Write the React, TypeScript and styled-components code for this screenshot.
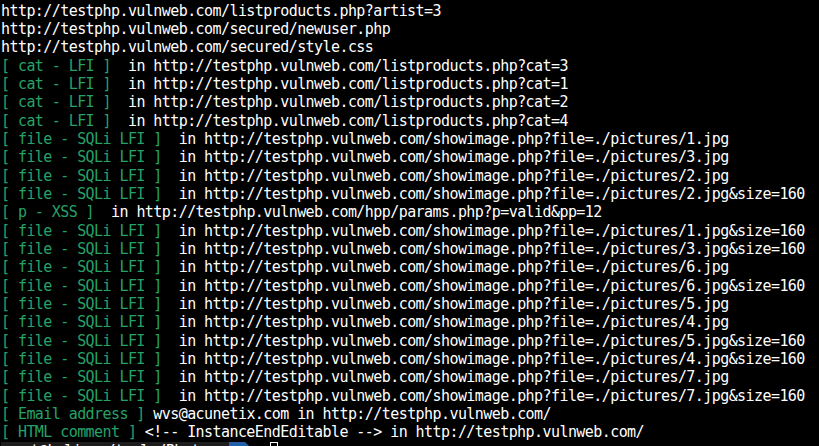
import React from "react";
import styled, { createGlobalStyle } from "styled-components";

const Global = createGlobalStyle`
  html, body {
    margin: 0;
    padding: 0;
    background: #000000;
    overflow: hidden;
  }
`;

const Terminal = styled.div`
  width: 819px;
  height: 446px;
  overflow: hidden;
  background: #000000;
  color: #ffffff;
  font-family: "DejaVu Sans Mono", "Liberation Mono", monospace;
  font-size: 15px;
  letter-spacing: -0.57px;
  line-height: 18.35px;
  padding: 1.5px 0 0 1px;
  box-sizing: border-box;
`;

const Line = styled.div`
  white-space: pre;
  height: 18.35px;
`;

const Tag = styled.span`
  color: #26a269;
`;

const PromptLine = styled.div`
  display: flex;
  align-items: stretch;
  height: 18.35px;
  white-space: pre;
`;

const Segment = styled.span<{ $bg: string }>`
  background: ${(p) => p.$bg};
  color: #ffffff;
  padding: 0 4px;
`;

const Arrow = styled.span<{ $color: string }>`
  width: 0;
  height: 0;
  border-top: 9.2px solid transparent;
  border-bottom: 9.2px solid transparent;
  border-left: 9px solid ${(p) => p.$color};
`;

const Cursor = styled.span`
  width: 8px;
  height: 16px;
  margin-left: 16px;
  border: 1px solid #ffffff;
  box-sizing: border-box;
`;

type Entry = { tag?: string; sep?: string; text: string };

const base = "http://testphp.vulnweb.com/";
const img = (n: string) => `${base}showimage.php?file=./pictures/${n}`;

const lines: Entry[] = [
  { text: `${base}listproducts.php?artist=3` },
  { text: `${base}secured/newuser.php` },
  { text: `${base}secured/style.css` },
  { tag: "[ cat - LFI ]", sep: "  in ", text: `${base}listproducts.php?cat=3` },
  { tag: "[ cat - LFI ]", sep: "  in ", text: `${base}listproducts.php?cat=1` },
  { tag: "[ cat - LFI ]", sep: "  in ", text: `${base}listproducts.php?cat=2` },
  { tag: "[ cat - LFI ]", sep: "  in ", text: `${base}listproducts.php?cat=4` },
  { tag: "[ file - SQLi LFI ]", sep: "  in ", text: img("1.jpg") },
  { tag: "[ file - SQLi LFI ]", sep: "  in ", text: img("3.jpg") },
  { tag: "[ file - SQLi LFI ]", sep: "  in ", text: img("2.jpg") },
  { tag: "[ file - SQLi LFI ]", sep: "  in ", text: img("2.jpg&size=160") },
  { tag: "[ p - XSS ]", sep: "  in ", text: `${base}hpp/params.php?p=valid&pp=12` },
  { tag: "[ file - SQLi LFI ]", sep: "  in ", text: img("1.jpg&size=160") },
  { tag: "[ file - SQLi LFI ]", sep: "  in ", text: img("3.jpg&size=160") },
  { tag: "[ file - SQLi LFI ]", sep: "  in ", text: img("6.jpg") },
  { tag: "[ file - SQLi LFI ]", sep: "  in ", text: img("6.jpg&size=160") },
  { tag: "[ file - SQLi LFI ]", sep: "  in ", text: img("5.jpg") },
  { tag: "[ file - SQLi LFI ]", sep: "  in ", text: img("4.jpg") },
  { tag: "[ file - SQLi LFI ]", sep: "  in ", text: img("5.jpg&size=160") },
  { tag: "[ file - SQLi LFI ]", sep: "  in ", text: img("4.jpg&size=160") },
  { tag: "[ file - SQLi LFI ]", sep: "  in ", text: img("7.jpg") },
  { tag: "[ file - SQLi LFI ]", sep: "  in ", text: img("7.jpg&size=160") },
  { tag: "[ Email address ]", sep: " ", text: `wvs@acunetix.com in ${base}` },
  { tag: "[ HTML comment ]", sep: " ", text: `<!-- InstanceEndEditable --> in ${base}` },
];

export default function App() {
  return (
    <>
      <Global />
      <Terminal>
        {lines.map((l, i) => (
          <Line key={i}>
            {l.tag && <Tag>{l.tag}</Tag>}
            {l.sep}
            {l.text}
          </Line>
        ))}
        <PromptLine>
          <Segment $bg="#1c1c1c">root@kali  ~/tools/Photon </Segment>
          <Segment $bg="#1f5fa8">✔</Segment>
          <Arrow $color="#1f5fa8" />
          <Cursor />
        </PromptLine>
      </Terminal>
    </>
  );
}
